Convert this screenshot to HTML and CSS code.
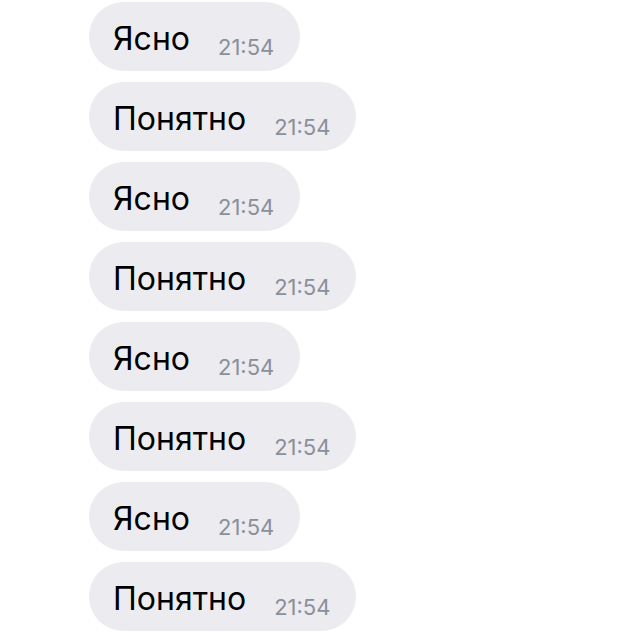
FILE: index.html
```html
<!DOCTYPE html>
<html lang="ru">
<head>
    <meta charset="UTF-8">
    <meta name="viewport" content="width=device-width, initial-scale=1.0">
    <title>Чат</title>
    <link rel="stylesheet" href="styles.css">
</head>
<body>
    <div class="chat">
        <div class="bubble"><span class="text">Ясно</span><span class="time">21:54</span></div>
        <div class="bubble"><span class="text">Понятно</span><span class="time">21:54</span></div>
        <div class="bubble"><span class="text">Ясно</span><span class="time">21:54</span></div>
        <div class="bubble"><span class="text">Понятно</span><span class="time">21:54</span></div>
        <div class="bubble"><span class="text">Ясно</span><span class="time">21:54</span></div>
        <div class="bubble"><span class="text">Понятно</span><span class="time">21:54</span></div>
        <div class="bubble"><span class="text">Ясно</span><span class="time">21:54</span></div>
        <div class="bubble"><span class="text">Понятно</span><span class="time">21:54</span></div>
    </div>
</body>
</html>
```

FILE: styles.css
```css
body {
    margin: 0;
    background-color: #fff;
    font-family: Inter, 'Liberation Sans', Arial, sans-serif;
}
.chat {
    display: flex;
    flex-direction: column;
    align-items: flex-start;
    gap: 11px;
    padding: 2px 0 0 89px;
}
.bubble {
    box-sizing: border-box;
    height: 69px;
    line-height: 65px;
    padding: 4px 26px 0 24px;
    border-radius: 35px;
    background-color: #ebebf0;
    white-space: nowrap;
}
.text {
    font-size: 32px;
    color: #000;
}
.time {
    font-size: 22px;
    color: #8a8f99;
    margin-left: 28px;
    vertical-align: -5px;
}
```
